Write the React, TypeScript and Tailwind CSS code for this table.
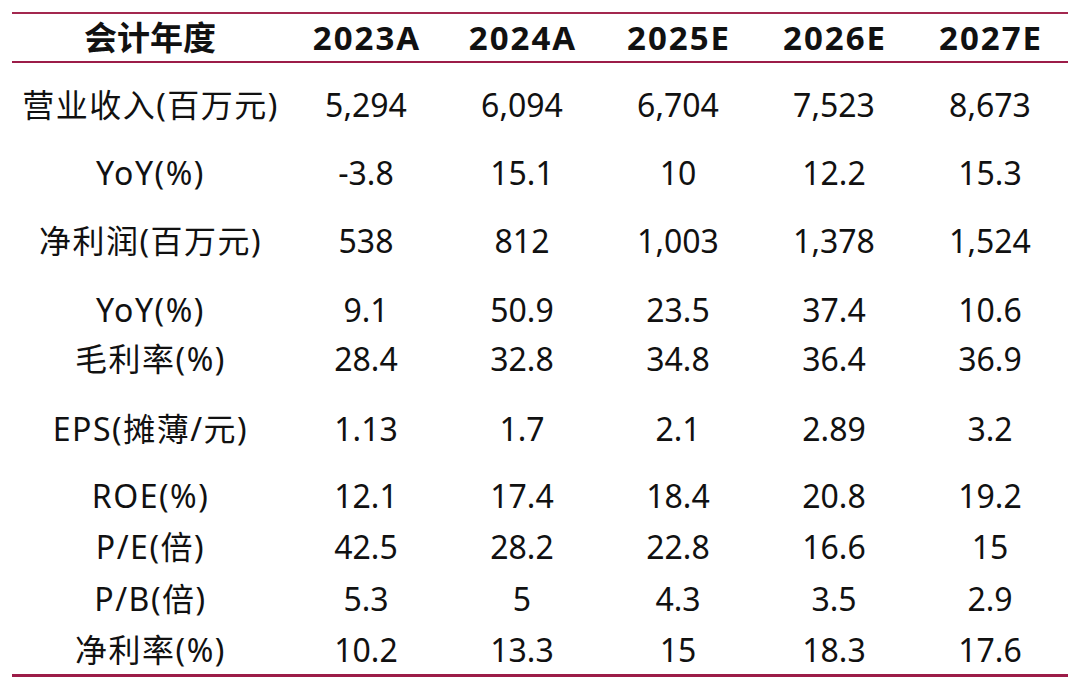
const years = ['2023A', '2024A', '2025E', '2026E', '2027E'];

// mt = gap above the row, tuned to the uneven spacing of the source table
const rows: { label: string; values: string[]; mt: string }[] = [
  { label: '营业收入(百万元)', values: ['5,294', '6,094', '6,704', '7,523', '8,673'], mt: 'mt-[22px]' },
  { label: 'YoY(%)', values: ['-3.8', '15.1', '10', '12.2', '15.3'], mt: 'mt-[28px]' },
  { label: '净利润(百万元)', values: ['538', '812', '1,003', '1,378', '1,524'], mt: 'mt-[28px]' },
  { label: 'YoY(%)', values: ['9.1', '50.9', '23.5', '37.4', '10.6'], mt: 'mt-[29px]' },
  { label: '毛利率(%)', values: ['28.4', '32.8', '34.8', '36.4', '36.9'], mt: 'mt-[9px]' },
  { label: 'EPS(摊薄/元)', values: ['1.13', '1.7', '2.1', '2.89', '3.2'], mt: 'mt-[30px]' },
  { label: 'ROE(%)', values: ['12.1', '17.4', '18.4', '20.8', '19.2'], mt: 'mt-[27px]' },
  { label: 'P/E(倍)', values: ['42.5', '28.2', '22.8', '16.6', '15'], mt: 'mt-[11px]' },
  { label: 'P/B(倍)', values: ['5.3', '5', '4.3', '3.5', '2.9'], mt: 'mt-[12px]' },
  { label: '净利率(%)', values: ['10.2', '13.3', '15', '18.3', '17.6'], mt: 'mt-[11px]' },
];

const cols = 'grid grid-cols-[276px_repeat(5,156px)]';

export default function App() {
  return (
    <div
      className="h-[690px] w-[1080px] bg-white text-[#111]"
      style={{ fontFamily: '"Noto Sans", "Noto Sans CJK SC", sans-serif' }}
    >
      <div className="ml-3 w-[1056px] pt-3">
        <div className={`${cols} h-[51px] items-center border-y-2 border-t-[#a3284f] border-b-[#9c1c48] text-[33px] font-bold leading-[40px]`}>
          <div className="text-center">会计年度</div>
          {years.map((y) => (
            <div key={y} className="pl-[2px] text-center tracking-[2px]">
              {y}
            </div>
          ))}
        </div>

        {rows.map((r, i) => (
          <div key={i} className={`${cols} ${r.mt} h-[40px] items-center text-[32px] leading-[40px]`}>
            <div className="pl-[1px] text-center tracking-[1.5px]">{r.label}</div>
            {r.values.map((v, j) => (
              <div key={j} className="text-center">
                {v}
              </div>
            ))}
          </div>
        ))}

        <div className="mt-[4px] h-[3px] bg-[#9c1c48]" />
      </div>
    </div>
  );
}
